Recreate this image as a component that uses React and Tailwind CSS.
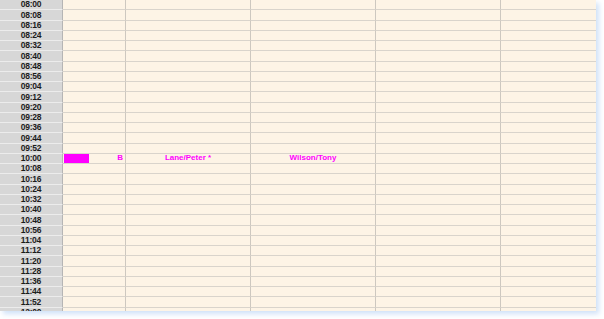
import React from "react";

const times = [];
for (let m = 8 * 60; m <= 12 * 60; m += 8) {
  const h = String(Math.floor(m / 60)).padStart(2, "0");
  const mm = String(m % 60).padStart(2, "0");
  times.push(`${h}:${mm}`);
}

const Row = ({ time }) => {
  const booked = time === "10:00";
  return (
    <div className="grid grid-cols-[63px_63px_125px_125px_125px_1fr] h-[10.25px] shrink-0">
      <div className="bg-[#d7d7d7] border-r border-r-[#b5b5b5] border-b border-b-[#ececec] flex items-center justify-center text-[8.5px] font-bold tracking-[-0.2px] text-[#1c1c1c] leading-none">
        {time}
      </div>
      <div className="border-r border-r-[#cdc8c0] border-b border-b-[#d9d4cc] flex items-center justify-between pl-px pr-[2px]">
        {booked && (
          <>
            <span className="w-[25px] h-[9px] bg-[#ff00ff]" />
            <span className="text-[8px] font-bold text-[#ff00ff] leading-none">B</span>
          </>
        )}
      </div>
      <div className="border-r border-r-[#cdc8c0] border-b border-b-[#d9d4cc] flex items-center justify-center text-[8px] font-bold text-[#ff00ff] leading-none">
        {booked && "Lane/Peter *"}
      </div>
      <div className="border-r border-r-[#cdc8c0] border-b border-b-[#d9d4cc] flex items-center justify-center text-[8px] font-bold text-[#ff00ff] leading-none">
        {booked && "Wilson/Tony"}
      </div>
      <div className="border-r border-r-[#cdc8c0] border-b border-b-[#d9d4cc]" />
      <div className="border-b border-b-[#d9d4cc]" />
    </div>
  );
};

export default function App() {
  return (
    <div className="w-[604px] h-[319px] bg-white" style={{ fontFamily: '"Liberation Sans", Arial, sans-serif' }}>
      <div className="w-[596px] h-[311px] overflow-hidden bg-[#fdf4e6] flex flex-col shadow-[3px_3px_5px_rgba(150,190,240,0.45)]">
        {times.map((t) => (
          <Row key={t} time={t} />
        ))}
      </div>
    </div>
  );
}
